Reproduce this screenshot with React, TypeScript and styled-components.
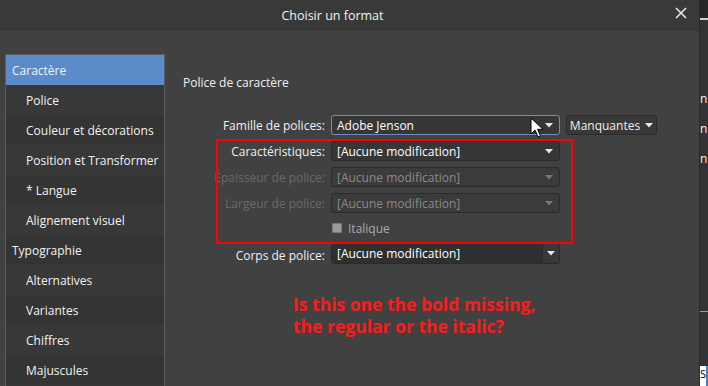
import React from 'react';
import styled, { createGlobalStyle } from 'styled-components';

const GlobalStyle = createGlobalStyle`
   html, body {
      margin: 0;
      padding: 0;
      background: #2b2b2b;
      overflow: hidden;
   }
   * {
      box-sizing: border-box;
   }
`;

type NavItem = { label: string; level: 0 | 1; selected?: boolean };

const navItems: NavItem[] = [
   { label: 'Caractère', level: 0, selected: true },
   { label: 'Police', level: 1 },
   { label: 'Couleur et décorations', level: 1 },
   { label: 'Position et Transformer', level: 1 },
   { label: '* Langue', level: 1 },
   { label: 'Alignement visuel', level: 1 },
   { label: 'Typographie', level: 0 },
   { label: 'Alternatives', level: 1 },
   { label: 'Variantes', level: 1 },
   { label: 'Chiffres', level: 1 },
   { label: 'Majuscules', level: 1 }
];

const CloseIcon = () => (
   <svg width='12' height='12' viewBox='0 0 12 12'>
      <path d='M1 1 L11 11 M11 1 L1 11' stroke='#e6e6e6' strokeWidth='1.6' />
   </svg>
);

const Caret = () => (
   <svg width='8' height='5' viewBox='0 0 8 5'>
      <path d='M0 0 H8 L4 4.5 Z' fill='currentColor' />
   </svg>
);

const Cursor = () => (
   <svg width='14' height='22' viewBox='0 0 14 22'>
      <path
         d='M1 1 L1 17 L5 13 L8 20 L10.5 19 L7.6 12.3 L13 12.3 Z'
         fill='#fff'
         stroke='#000'
         strokeWidth='1'
         strokeLinejoin='round'
      />
   </svg>
);

const App: React.FC = (): JSX.Element => {
   return (
      <>
         <GlobalStyle />
         <Screen>
            <Dialog>
               <TitleBar>
                  <Title>Choisir un format</Title>
                  <CloseButton>
                     <CloseIcon />
                  </CloseButton>
               </TitleBar>
               <Body>
                  <Sidebar>
                     {navItems.map((item, i) => (
                        <NavRow key={i} level={item.level} selected={item.selected} odd={i % 2 === 1}>
                           {item.label}
                        </NavRow>
                     ))}
                  </Sidebar>
                  <Panel>
                     <SectionTitle>Police de caractère</SectionTitle>
                     <Form>
                        <Label>Famille de polices:</Label>
                        <Field focused>
                           <span>Adobe Jenson</span>
                           <Caret />
                        </Field>
                        <MissingButton>
                           Manquantes <Caret />
                        </MissingButton>

                        <Label>Caractéristiques:</Label>
                        <Field>
                           <span>[Aucune modification]</span>
                           <Caret />
                        </Field>
                        <span />

                        <Label disabled>Épaisseur de police:</Label>
                        <Field disabled>
                           <span>[Aucune modification]</span>
                           <Caret />
                        </Field>
                        <span />

                        <Label disabled>Largeur de police:</Label>
                        <Field disabled>
                           <span>[Aucune modification]</span>
                           <Caret />
                        </Field>
                        <span />

                        <span />
                        <CheckRow>
                           <CheckBox />
                           Italique
                        </CheckRow>
                        <span />

                        <Label>Corps de police:</Label>
                        <ComboField>
                           <ComboInput>[Aucune modification]</ComboInput>
                           <ComboArrow>
                              <Caret />
                           </ComboArrow>
                        </ComboField>
                        <span />

                        <Highlight />
                        <MouseCursor>
                           <Cursor />
                        </MouseCursor>
                     </Form>
                     <Annotation>
                        Is this one the bold missing,
                        <br />
                        the regular or the italic?
                     </Annotation>
                  </Panel>
               </Body>
            </Dialog>
            <BackStrip>
               <StripTop />
               <StripGlyph top={90}>n</StripGlyph>
               <StripGlyph top={120}>n</StripGlyph>
               <StripGlyph top={150}>n</StripGlyph>
               <StripLine top={311} />
               <StripFooter>S</StripFooter>
            </BackStrip>
         </Screen>
      </>
   );
};

const Screen = styled.div`
   display: flex;
   width: 708px;
   height: 386px;
   font-family: 'Open Sans', 'Noto Sans', sans-serif;
   font-size: 12px;
   color: #f0f0f0;
`;

const Dialog = styled.div`
   width: 700px;
   height: 386px;
   display: flex;
   flex-direction: column;
   background: #414141;
   border-right: 1px solid #2a2a2a;
`;

const TitleBar = styled.div`
   height: 31px;
   background: #393939;
   display: flex;
   align-items: center;
   justify-content: center;
   position: relative;
`;

const Title = styled.div`
   font-size: 12.5px;
   color: #f2f2f2;
   margin-left: -34px;
   margin-top: -1px;
`;

const CloseButton = styled.div`
   position: absolute;
   right: 12px;
   top: 7px;
   display: flex;
`;

const Body = styled.div`
   flex: 1;
   display: flex;
   padding-top: 23px;
   min-height: 0;
`;

const Sidebar = styled.div`
   width: 160px;
   margin-left: 5px;
   border: 1px solid #5c5c5c;
   border-bottom: none;
   background: #363636;
   display: flex;
   flex-direction: column;
   overflow: hidden;
`;

const NavRow = styled.div<{ level: 0 | 1; selected?: boolean; odd?: boolean }>`
   height: 30px;
   flex-shrink: 0;
   display: flex;
   align-items: center;
   padding-left: ${({ level }) => (level === 0 ? 6 : 20)}px;
   background: ${({ selected, odd }) => (selected ? '#5c8bca' : odd ? '#383838' : '#343434')};
   color: #f2f2f2;
   font-size: 12px;
   white-space: nowrap;
`;

const Panel = styled.div`
   flex: 1;
   padding: 20px 0 0 18px;
   display: flex;
   flex-direction: column;
`;

const SectionTitle = styled.div`
   font-size: 12px;
   color: #f0f0f0;
   height: 18px;
   line-height: 18px;
`;

const Form = styled.div`
   position: relative;
   margin-top: 23px;
   display: grid;
   grid-template-columns: 142px 229px 91px;
   grid-template-rows: 20px 20px 20px 20px 20px 20px;
   column-gap: 6px;
   row-gap: 6px;
   align-items: center;
`;

const Label = styled.div<{ disabled?: boolean }>`
   text-align: right;
   white-space: nowrap;
   color: ${({ disabled }) => (disabled ? '#696969' : '#f0f0f0')};
`;

const Field = styled.div<{ focused?: boolean; disabled?: boolean }>`
   height: 20px;
   display: flex;
   align-items: center;
   justify-content: space-between;
   padding: 0 6px 0 5px;
   border-radius: 3px;
   background: ${({ disabled }) => (disabled ? '#3b3b3b' : '#363636')};
   border: 1px solid ${({ focused }) => (focused ? '#6d8fbd' : '#2b2b2b')};
   color: ${({ disabled }) => (disabled ? '#8a8a8a' : '#ffffff')};
   white-space: nowrap;

   svg {
      color: ${({ disabled }) => (disabled ? '#777' : '#e8e8e8')};
   }
`;

const MissingButton = styled.div`
   height: 20px;
   display: flex;
   align-items: center;
   justify-content: center;
   gap: 5px;
   border-radius: 3px;
   background: #383838;
   border: 1px solid #2b2b2b;
   color: #f0f0f0;

   svg {
      color: #e8e8e8;
   }
`;

const CheckRow = styled.div`
   display: flex;
   align-items: center;
   gap: 6px;
   color: #a8a8a8;
   padding-left: 1px;
   margin-top: -2px;
`;

const CheckBox = styled.span`
   width: 10px;
   height: 10px;
   background: #9a9a9a;
   border: 1px solid #7a7a7a;
   border-radius: 1px;
`;

const ComboField = styled.div`
   height: 21px;
   margin-top: -3px;
   display: flex;
   border-radius: 3px;
   border: 1px solid #2b2b2b;
   overflow: hidden;
`;

const ComboInput = styled.div`
   flex: 1;
   display: flex;
   align-items: center;
   padding-left: 5px;
   background: #2f2f2f;
   color: #ffffff;
   white-space: nowrap;
`;

const ComboArrow = styled.div`
   width: 17px;
   display: flex;
   align-items: center;
   justify-content: center;
   background: #383838;
   border-left: 1px solid #2b2b2b;
   color: #e8e8e8;
`;

const Highlight = styled.div`
   position: absolute;
   left: 33px;
   top: 24px;
   width: 357px;
   height: 105px;
   border: 2px solid #ff0000;
   pointer-events: none;
`;

const MouseCursor = styled.div`
   position: absolute;
   left: 347px;
   top: 2px;
   display: flex;
`;

const Annotation = styled.div`
   margin: 28px 0 0 110px;
   font-family: 'Open Sans', 'Noto Sans', sans-serif;
   font-weight: 700;
   font-size: 17.5px;
   line-height: 22px;
   color: #ff1a1a;
`;

const BackStrip = styled.div`
   position: relative;
   flex: 1;
   height: 386px;
   background: #333333;
   overflow: hidden;
`;

const StripTop = styled.div`
   height: 20px;
   background: #262626;
   border-bottom: 2px solid #cfcfcf;
`;

const StripGlyph = styled.div<{ top: number }>`
   position: absolute;
   top: ${({ top }) => top}px;
   left: 0;
   font-size: 12px;
   color: #f0f0f0;
`;

const StripLine = styled.div<{ top: number }>`
   position: absolute;
   top: ${({ top }) => top}px;
   left: 0;
   right: 0;
   height: 1px;
   background: #9a9a9a;
`;

const StripFooter = styled.div`
   position: absolute;
   top: 366px;
   left: 0;
   right: 0;
   bottom: 0;
   background: #ffffff;
   color: #000;
   font-size: 11px;
   border-right: 2px solid #3d7fd9;
`;

export default App;
